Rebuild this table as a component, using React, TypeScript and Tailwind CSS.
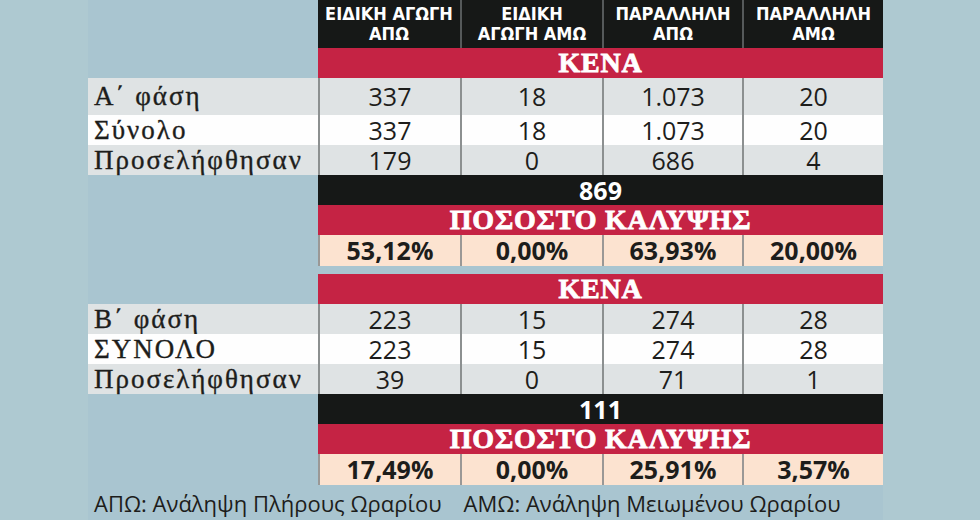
const cols = 'grid grid-cols-[230px_142px_142px_140px_141px]'
const num = "font-['Open_Sans'] font-medium text-[25px] leading-none text-[#1d1d1b]"
const slab =
  "font-['Liberation_Serif',serif] font-bold text-white text-[28px] leading-none tracking-[0.8px] [-webkit-text-stroke:0.8px_white]"

type Row = { label: string; vals: string[]; bg: string; h: string }

const DataRow = ({ label, vals, bg, h }: Row) => (
  <div className={`${cols} ${bg} ${h}`}>
    <div className="flex items-center pl-[6px] font-['Liberation_Serif',serif] text-[27px] leading-none text-[#1d1d1b] tracking-[2px] [-webkit-text-stroke:0.35px_#1d1d1b]">
      <span className="block">{label}</span>
    </div>
    {vals.map((v, i) => (
      <div key={i} className={`flex items-center justify-center border-l-2 border-[#8c9090] ${num}`}>
        <span className="block">{v}</span>
      </div>
    ))}
  </div>
)

const Band = ({ children, bg, h, cls }: { children: React.ReactNode; bg: string; h: string; cls: string }) => (
  <div className={`flex ${h}`}>
    <div className="w-[230px]" />
    <div className={`flex-1 flex items-center justify-center ${bg} ${cls}`}>{children}</div>
  </div>
)

const PctRow = ({ vals, h }: { vals: string[]; h: string }) => (
  <div className={`${cols} ${h}`}>
    <div />
    {vals.map((v, i) => (
      <div
        key={i}
        className="flex items-center justify-center bg-[#fce3d0] border-l-2 border-[#9a9896] font-['Open_Sans'] font-bold text-[25px] leading-none text-[#1d1d1b]"
      >
        {v}
      </div>
    ))}
  </div>
)

const heads = [
  ['ΕΙΔΙΚΗ ΑΓΩΓΗ', 'ΑΠΩ'],
  ['ΕΙΔΙΚΗ', 'ΑΓΩΓΗ ΑΜΩ'],
  ['ΠΑΡΑΛΛΗΛΗ', 'ΑΠΩ'],
  ['ΠΑΡΑΛΛΗΛΗ', 'ΑΜΩ'],
]

function Section({ phase, total, vals, pct, first }: { phase: [string, string]; total: string; vals: string[][]; pct: string[]; first?: boolean }) {
  return (
    <>
      <Band bg="bg-[#c52344]" h="h-[30px]" cls={slab}>ΚΕΝΑ</Band>
      <DataRow label={phase[0]} vals={vals[0]} bg="bg-[#dfe3e4]" h={first ? 'h-[37px]' : 'h-[30px]'} />
      <DataRow label={phase[1]} vals={vals[1]} bg="bg-[#fefefe]" h="h-[30px]" />
      <DataRow label="Προσελήφθησαν" vals={vals[2]} bg="bg-[#dfe3e4]" h="h-[30px]" />
      <Band bg="bg-[#161817]" h="h-[30px]" cls="font-['Open_Sans'] font-bold text-white text-[25px] leading-none">
        {total}
      </Band>
      <Band bg="bg-[#c52344]" h="h-[30px]" cls={slab}>ΠΟΣΟΣΤΟ ΚΑΛΥΨΗΣ</Band>
      <PctRow vals={pct} h="h-[31px]" />
    </>
  )
}

export default function App() {
  return (
    <div className="w-[980px] h-[520px] bg-[#aec9d1] flex overflow-hidden">
      <div className="ml-[88px] w-[795px] bg-[#a9c5d0] flex flex-col">
        <div className={`${cols} h-[48px]`}>
          <div />
          {heads.map((h, i) => (
            <div
              key={i}
              className={`flex flex-col items-center justify-center bg-[#161817] text-white font-['DejaVu_Sans_Condensed',sans-serif] font-bold text-[18px] leading-[20px] ${i > 0 ? 'border-l-2 border-[#55595a]' : ''}`}
            >
              <span>{h[0]}</span>
              <span>{h[1]}</span>
            </div>
          ))}
        </div>
        <Section
          first
          phase={['Α΄ φάση', 'Σύνολο']}
          total="869"
          vals={[
            ['337', '18', '1.073', '20'],
            ['337', '18', '1.073', '20'],
            ['179', '0', '686', '4'],
          ]}
          pct={['53,12%', '0,00%', '63,93%', '20,00%']}
        />
        <div className="h-[8px]" />
        <Section
          phase={['Β΄ φάση', 'ΣΥΝΟΛΟ']}
          total="111"
          vals={[
            ['223', '15', '274', '28'],
            ['223', '15', '274', '28'],
            ['39', '0', '71', '1'],
          ]}
          pct={['17,49%', '0,00%', '25,91%', '3,57%']}
        />
        <div className="flex-1 flex items-center pl-[6px] gap-[22px] font-['Open_Sans'] text-[22px] leading-none text-[#1d1d1b]">
          <span>ΑΠΩ: Ανάληψη Πλήρους Ωραρίου</span>
          <span>ΑΜΩ: Ανάληψη Μειωμένου Ωραρίου</span>
        </div>
      </div>
    </div>
  )
}
